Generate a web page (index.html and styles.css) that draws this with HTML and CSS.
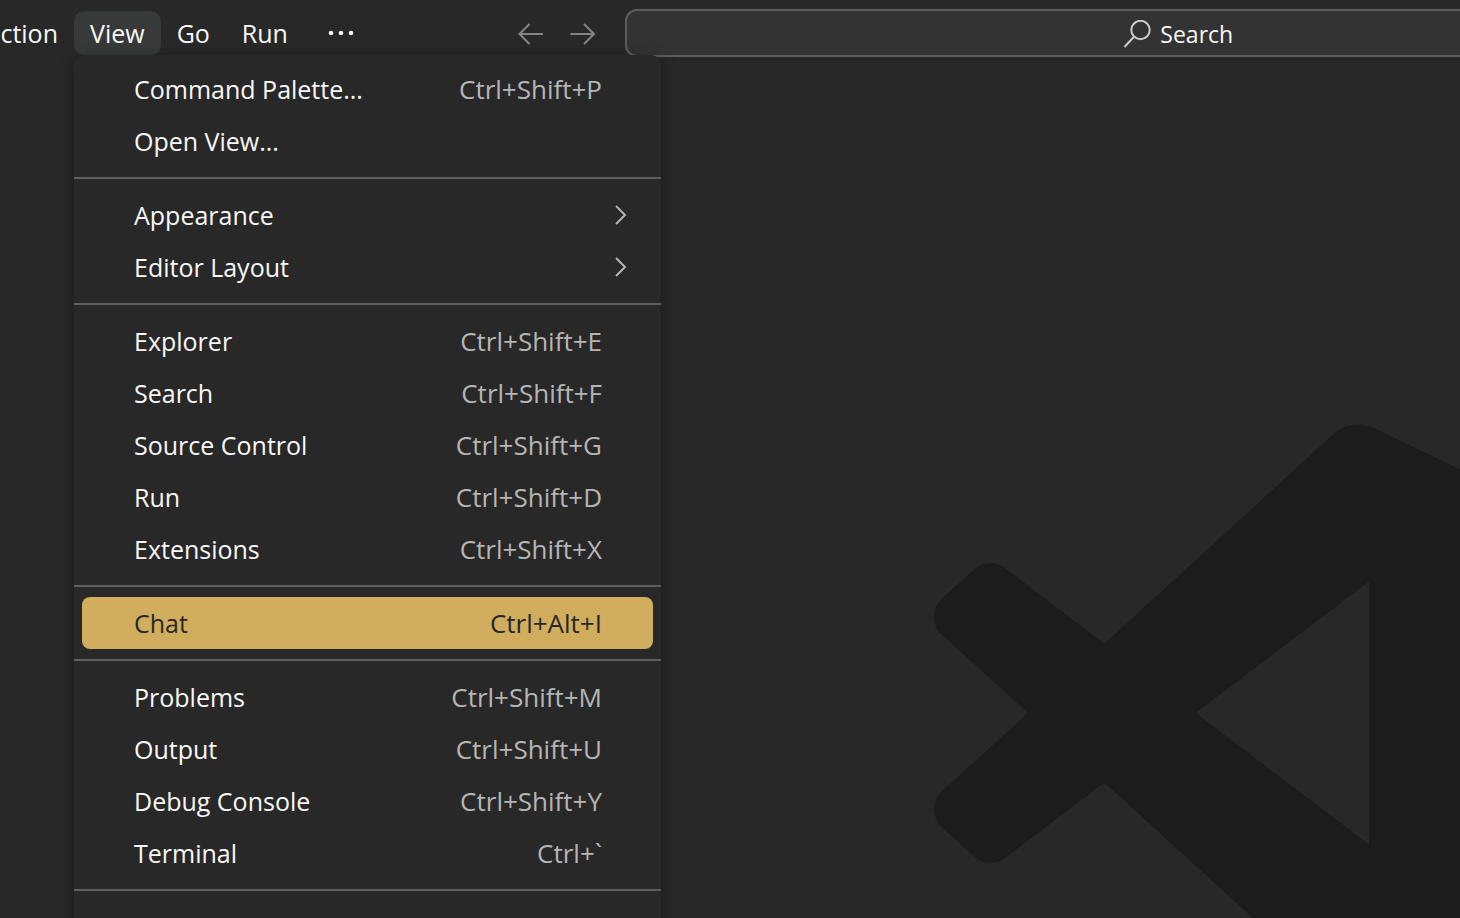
FILE: index.html
```html
<!DOCTYPE html>
<html lang="en">
<head>
<meta charset="utf-8">
<title>Visual Studio Code</title>
<link rel="stylesheet" href="styles.css">
</head>
<body>
<header class="titlebar">
  <nav class="menubar" aria-label="Application menu">
    <div class="menubar-clip"><button class="menubar-item" type="button">Selection</button></div>
    <div class="menubar-group">
      <button class="menubar-item is-open" type="button" aria-expanded="true">View</button>
      <div class="menu" role="menu">
        <button class="menu-item" type="button" role="menuitem"><span>Command Palette...</span><span class="keys">Ctrl+Shift+P</span></button>
        <button class="menu-item" type="button" role="menuitem"><span>Open View...</span></button>
        <hr class="separator">
        <button class="menu-item has-submenu" type="button" role="menuitem"><span>Appearance</span><svg class="chevron" viewBox="0 0 14 22"><path d="M2 2l9 9-9 9"/></svg></button>
        <button class="menu-item has-submenu" type="button" role="menuitem"><span>Editor Layout</span><svg class="chevron" viewBox="0 0 14 22"><path d="M2 2l9 9-9 9"/></svg></button>
        <hr class="separator">
        <button class="menu-item" type="button" role="menuitem"><span>Explorer</span><span class="keys">Ctrl+Shift+E</span></button>
        <button class="menu-item" type="button" role="menuitem"><span>Search</span><span class="keys">Ctrl+Shift+F</span></button>
        <button class="menu-item" type="button" role="menuitem"><span>Source Control</span><span class="keys">Ctrl+Shift+G</span></button>
        <button class="menu-item" type="button" role="menuitem"><span>Run</span><span class="keys">Ctrl+Shift+D</span></button>
        <button class="menu-item" type="button" role="menuitem"><span>Extensions</span><span class="keys">Ctrl+Shift+X</span></button>
        <hr class="separator">
        <button class="menu-item is-selected" type="button" role="menuitem"><span>Chat</span><span class="keys">Ctrl+Alt+I</span></button>
        <hr class="separator">
        <button class="menu-item" type="button" role="menuitem"><span>Problems</span><span class="keys">Ctrl+Shift+M</span></button>
        <button class="menu-item" type="button" role="menuitem"><span>Output</span><span class="keys">Ctrl+Shift+U</span></button>
        <button class="menu-item" type="button" role="menuitem"><span>Debug Console</span><span class="keys">Ctrl+Shift+Y</span></button>
        <button class="menu-item" type="button" role="menuitem"><span>Terminal</span><span class="keys">Ctrl+`</span></button>
        <hr class="separator">
      </div>
    </div>
    <button class="menubar-item" type="button">Go</button>
    <button class="menubar-item" type="button">Run</button>
    <button class="menubar-more" type="button" aria-label="More"><svg viewBox="0 0 32 32"><circle cx="6" cy="16" r="2.3"/><circle cx="16" cy="16" r="2.3"/><circle cx="26" cy="16" r="2.3"/></svg></button>
  </nav>
  <div class="history">
    <button class="history-button" type="button" aria-label="Go back"><svg viewBox="0 0 32 32"><path d="M29 17H5.500M15.500 7L5.500 17 15.500 27"/></svg></button>
    <button class="history-button" type="button" aria-label="Go forward"><svg viewBox="0 0 32 32"><path d="M4.500 17H28M18 7L28 17 18 27"/></svg></button>
  </div>
  <button class="command-center" type="button"><svg class="search-icon" viewBox="0 0 28 28"><circle cx="17.500" cy="10" r="9.200"/><path d="M11 16.800L1.500 27"/></svg><span>Search</span></button>
</header>
<main class="editor">
  <svg class="watermark" viewBox="934 424 526 494" aria-hidden="true"><path fill-rule="evenodd" d="M942 598.300L974 569.700C983 561 996 561 1005.400 568.300L1104.300 643.700L1333.200 434.300C1344 424 1360 421.500 1374 428L1460 469.500V918H1252.900L1104.300 782.500L1005.400 857.700C996 865 983 865 974 856.300L942 827.500C931.500 817 931.500 801 942 791L1028.200 713L942 635C931.500 625 931.500 609 942 598.300ZM1369 581.500L1195.700 713L1369 844.500Z"/></svg>
</main>
</body>
</html>
```

FILE: styles.css
```css
* {
  box-sizing: border-box;
}

body {
  margin: 0;
  height: 100vh;
  display: flex;
  flex-direction: column;
  overflow: hidden;
  background: #282828;
  color: #f8f8f8;
  font: 25px/36px "Open Sans", "Noto Sans", sans-serif;
}

button {
  margin: 0;
  padding: 0;
  border: 0;
  background: none;
  color: inherit;
  font: inherit;
}

svg {
  display: block;
  flex: none;
}

.titlebar {
  display: flex;
  align-items: center;
  flex: none;
  padding-top: 9px;
}

.menubar,
.history {
  display: flex;
  flex: none;
}

.menubar-clip {
  display: flex;
  justify-content: flex-end;
  width: 74px;
  overflow: hidden;
}

.menubar-group {
  position: relative;
}

.menubar-item {
  height: 44px;
  padding: 0 16px;
  border-radius: 10px;
}

.is-open {
  background: #383a39;
}

.menubar-more {
  padding: 6px 22px 6px 21px;
}

.menubar-more svg {
  width: 32px;
  height: 32px;
  fill: #f8f8f8;
}

.history {
  gap: 20px;
  margin-left: 135px;
}

.history-button svg {
  width: 32px;
  height: 32px;
  fill: none;
  stroke: #858585;
  stroke-width: 2;
}

.command-center {
  display: flex;
  align-items: center;
  gap: 9px;
  flex: 1;
  height: 48px;
  margin-left: 27px;
  padding: 2px 0 0 34vw;
  border: 2px solid #5c5c5c;
  border-right: 0;
  border-radius: 12px 0 0 12px;
  background: #333333;
  font-size: 23px;
}

.search-icon {
  width: 28px;
  height: 28px;
  fill: none;
  stroke: #cccccc;
  stroke-width: 2;
}

.menu {
  position: absolute;
  z-index: 1;
  top: 100%;
  left: 0;
  width: 587px;
  padding: 8px 0 60px;
  border-radius: 10px;
  background: #282828;
  box-shadow: 0 4px 16px rgba(0, 0, 0, 0.36);
}

.menu-item {
  display: flex;
  align-items: center;
  justify-content: space-between;
  width: calc(100% - 16px);
  height: 52px;
  margin: 0 8px;
  padding: 0 51px 0 52px;
  border-radius: 8px;
}

.has-submenu {
  padding-right: 25px;
}

.keys {
  color: #b5b5b5;
  font-size: 26px;
}

.is-selected,
.is-selected .keys {
  color: #282828;
}

.is-selected {
  background: #d0ae5d;
}

.separator {
  height: 2px;
  margin: 10px 0;
  border: 0;
  background: #606060;
}

.chevron {
  width: 14px;
  height: 22px;
  fill: none;
  stroke: #b5b5b5;
  stroke-width: 2;
}

.editor {
  display: flex;
  flex: 1;
  align-items: flex-end;
  justify-content: flex-end;
  min-height: 0;
}

.watermark {
  width: 526px;
  height: 494px;
  fill: #1c1c1c;
}
```
